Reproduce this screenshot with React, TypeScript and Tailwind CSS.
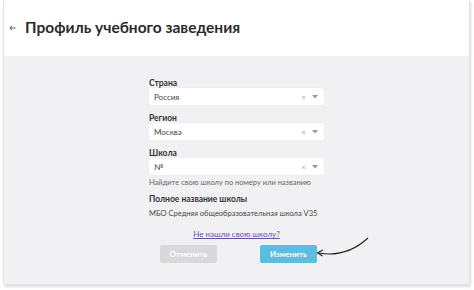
import React from "react";

const Select = ({ value }: { value: string }) => {
  return (
    <div className="flex h-[17px] w-[175px] items-center rounded-[2px] bg-white pl-[5px] pr-[6px] shadow-[0_0_1px_rgba(0,0,0,0.15)]">
      <span className="flex-1 text-[8px] text-[#444]">{value}</span>
      <span className="mr-[6px] text-[8px] leading-none text-[#aaa]">×</span>
      <svg width="6" height="4" viewBox="0 0 6 4">
        <path d="M0 0 L6 0 L3 3.5 Z" fill="#999" />
      </svg>
    </div>
  );
};

const Field = ({ label, value }: { label: string; value: string }) => {
  return (
    <div className="flex flex-col gap-[0px]">
      <span className="text-[8.5px] leading-[10px] font-bold text-[#333]">{label}</span>
      <Select value={value} />
    </div>
  );
};

const App = () => {
  return (
    <div className="h-[290px] w-[474px] bg-white pl-[3px] pr-[4px] pb-[5px] font-['Lato',sans-serif]">
      <div className="flex h-full flex-col overflow-hidden rounded-b-[3px] border-x border-b border-[#e2e2e4] shadow-[1px_2px_3px_rgba(0,0,0,0.15)]">
        <div className="flex h-[56px] shrink-0 items-center gap-[6px] bg-white pl-[1px]">
          <div className="flex h-[14px] w-[14px] items-center justify-center rounded-full">
            <svg width="7" height="6" viewBox="0 0 7 6">
              <path d="M6.5 3 H1 M3 0.8 L0.8 3 L3 5.2" stroke="#555" strokeWidth="1" fill="none" />
            </svg>
          </div>
          <h1 className="text-[15.5px] font-bold text-[#2a2a2a]">
            Профиль учебного заведения
          </h1>
        </div>
        <div className="flex flex-1 flex-col items-center bg-[#f1f1f3] pt-[22px]">
          <div className="flex w-[175px] flex-col">
            <div className="flex flex-col gap-[8px]">
              <Field label="Страна" value="Россия" />
              <Field label="Регион" value="Москва" />
              <Field label="Школа" value="№" />
            </div>
            <span className="mt-[3px] text-[7.5px] leading-[10px] text-[#666]">
              Найдите свою школу по номеру или названию
            </span>
            <span className="mt-[6px] text-[8.5px] leading-[10px] font-bold text-[#333]">
              Полное название школы
            </span>
            <span className="mt-[5px] text-[7.5px] leading-[10px] text-[#444]">
              МБО Средняя общеобразовательная школа V35
            </span>
          </div>
          <a className="mt-[10px] text-[8px] leading-[10px] text-[#6a4fa0] underline">
            Не нашли свою школу?
          </a>
          <div className="relative mt-[6px] flex gap-[43px] pl-[4px]">
            <button className="h-[18px] w-[57px] rounded-[2px] bg-[#d9d9db] text-[8px] font-bold text-white">
              Отменить
            </button>
            <button className="h-[18px] w-[57px] rounded-[2px] bg-[#5bbde0] text-[8px] font-bold text-white">
              Изменить
            </button>
            <svg
              className="absolute left-[160px] top-[-8px]"
              width="60"
              height="24"
              viewBox="0 0 60 24"
            >
              <path d="M52 1 C40 12 25 20 3 16" stroke="#222" strokeWidth="1.1" fill="none" />
              <path d="M7 13 L1.5 15.8 L6.5 19" stroke="#222" strokeWidth="1.1" fill="none" />
            </svg>
          </div>
        </div>
      </div>
    </div>
  );
};

export default App;
